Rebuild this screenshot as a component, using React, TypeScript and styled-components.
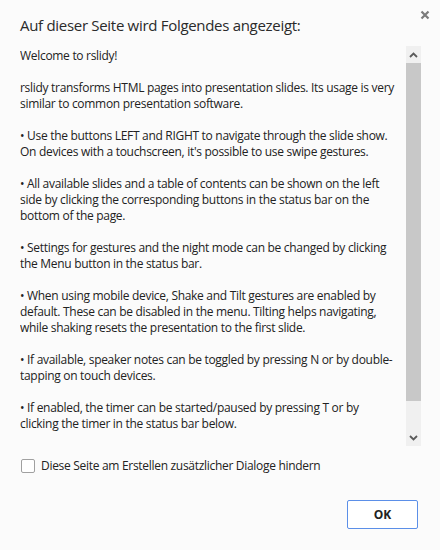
import React from "react";
import styled, { createGlobalStyle } from "styled-components";

const Global = createGlobalStyle`
  html, body { margin: 0; padding: 0; background: #fbfbfb; }
  body { font-family: "Open Sans", "Noto Sans", sans-serif; color: #222; }
`;

const Dialog = styled.div`
  position: relative;
  width: 440px;
  height: 550px;
  box-sizing: border-box;
  background: #fbfbfb;
  padding: 15px 20px 0 20px;
  display: flex;
  flex-direction: column;
`;

const Title = styled.h1`
  margin: 0;
  font-size: 15px;
  font-weight: 400;
  line-height: 20px;
  color: #2a2a2a;
  letter-spacing: -0.3px;
`;

const Close = styled.button`
  position: absolute;
  top: 9px;
  right: 9px;
  width: 12px;
  height: 12px;
  padding: 0;
  border: 0;
  background: transparent;
  display: flex;
  align-items: center;
  justify-content: center;
`;

const MessageRow = styled.div`
  margin-top: 11px;
  display: flex;
  height: 400px;
`;

const MessageText = styled.div`
  flex: 1;
  overflow: hidden;
  padding-top: 2px;
  font-size: 12px;
  line-height: 16px;
  color: #222;
  letter-spacing: -0.3px;
`;

const Para = styled.p`
  margin: 0 0 16px 0;
  white-space: nowrap;
`;

const Scrollbar = styled.div`
  width: 15px;
  margin-right: -1px;
  background: #f0f0f0;
  display: flex;
  flex-direction: column;
`;

const ArrowBtn = styled.div`
  height: 17px;
  display: flex;
  align-items: center;
  justify-content: center;
`;

const Thumb = styled.div`
  height: 338px;
  background: #c8c8c8;
`;

const Track = styled.div`
  flex: 1;
`;

const CheckRow = styled.label`
  margin-top: 12px;
  display: flex;
  align-items: center;
  gap: 6px;
  font-size: 12px;
  line-height: 16px;
  color: #222;
  letter-spacing: -0.3px;
`;

const Box = styled.span`
  width: 12px;
  height: 12px;
  margin-left: 1px;
  border: 1px solid #a0a0a0;
  border-radius: 2px;
  background: #fff;
`;

const Footer = styled.div`
  margin-top: 26px;
  display: flex;
  justify-content: flex-end;
  padding-right: 2px;
`;

const OkButton = styled.button`
  width: 71px;
  height: 29px;
  box-sizing: border-box;
  border: 1px solid #5b8fe8;
  border-radius: 2px;
  background: #fff;
  font-family: "Open Sans", "Noto Sans", sans-serif;
  font-weight: 700;
  font-size: 12px;
  color: #222;
`;

const paragraphs: string[][] = [
  ["Welcome to rslidy!"],
  [
    "rslidy transforms HTML pages into presentation slides. Its usage is very",
    "similar to common presentation software.",
  ],
  [
    "• Use the buttons LEFT and RIGHT to navigate through the slide show.",
    "On devices with a touchscreen, it's possible to use swipe gestures.",
  ],
  [
    "• All available slides and a table of contents can be shown on the left",
    "side by clicking the corresponding buttons in the status bar on the",
    "bottom of the page.",
  ],
  [
    "• Settings for gestures and the night mode can be changed by clicking",
    "the Menu button in the status bar.",
  ],
  [
    "• When using mobile device, Shake and Tilt gestures are enabled by",
    "default. These can be disabled in the menu. Tilting helps navigating,",
    "while shaking resets the presentation to the first slide.",
  ],
  [
    "• If available, speaker notes can be toggled by pressing N or by double-",
    "tapping on touch devices.",
  ],
  [
    "• If enabled, the timer can be started/paused by pressing T or by",
    "clicking the timer in the status bar below.",
  ],
];

export default function App() {
  return (
    <>
      <Global />
      <Dialog>
        <Title>Auf dieser Seite wird Folgendes angezeigt:</Title>
        <Close aria-label="Schließen">
          <svg width="10" height="10" viewBox="0 0 10 10">
            <path d="M1.5 1.5 L8.5 8.5 M8.5 1.5 L1.5 8.5" stroke="#7b7b7b" strokeWidth="2.2" />
          </svg>
        </Close>
        <MessageRow>
          <MessageText>
            {paragraphs.map((lines, i) => (
              <Para key={i}>
                {lines.map((l, j) => (
                  <React.Fragment key={j}>
                    {l}
                    {j < lines.length - 1 && <br />}
                  </React.Fragment>
                ))}
              </Para>
            ))}
          </MessageText>
          <Scrollbar>
            <ArrowBtn>
              <svg width="9" height="6" viewBox="0 0 9 6">
                <path d="M1 5 L4.5 1.5 L8 5" stroke="#5a5a5a" strokeWidth="1.8" fill="none" />
              </svg>
            </ArrowBtn>
            <Thumb />
            <Track />
            <ArrowBtn>
              <svg width="9" height="6" viewBox="0 0 9 6">
                <path d="M1 1 L4.5 4.5 L8 1" stroke="#5a5a5a" strokeWidth="1.8" fill="none" />
              </svg>
            </ArrowBtn>
          </Scrollbar>
        </MessageRow>
        <CheckRow>
          <Box />
          Diese Seite am Erstellen zusätzlicher Dialoge hindern
        </CheckRow>
        <Footer>
          <OkButton>OK</OkButton>
        </Footer>
      </Dialog>
    </>
  );
}
